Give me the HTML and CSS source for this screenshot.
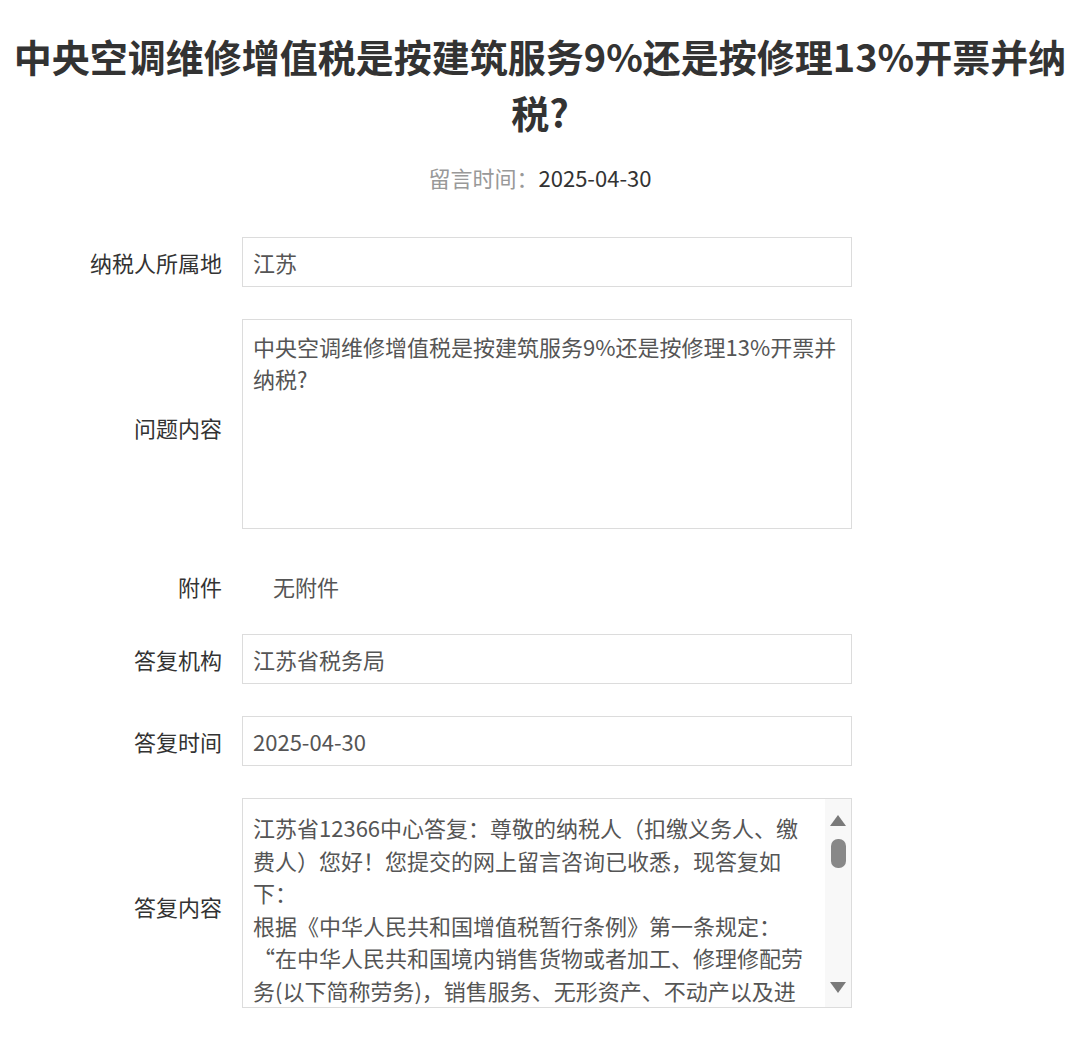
FILE: index.html
```html
<!DOCTYPE html>
<html lang="zh-CN">
<head>
<meta charset="utf-8">
<title>留言详情</title>
<link rel="stylesheet" href="styles.css">
</head>
<body>
<div class="page">
  <h1 class="title">中央空调维修增值税是按建筑服务9%还是按修理13%开票并纳税?</h1>
  <div class="meta"><span class="meta-label">留言时间：</span><span class="meta-value">2025-04-30</span></div>

  <div class="form">
    <div class="row">
      <div class="label">纳税人所属地</div>
      <div class="field input">江苏</div>
    </div>
    <div class="row">
      <div class="label label-tall">问题内容</div>
      <div class="field textarea">中央空调维修增值税是按建筑服务9%还是按修理13%开票并纳税?</div>
    </div>
    <div class="row row-attach">
      <div class="label">附件</div>
      <div class="attach">无附件</div>
    </div>
    <div class="row">
      <div class="label">答复机构</div>
      <div class="field input">江苏省税务局</div>
    </div>
    <div class="row">
      <div class="label">答复时间</div>
      <div class="field input">2025-04-30</div>
    </div>
    <div class="row">
      <div class="label label-tall">答复内容</div>
      <div class="field answer">
        <div class="answer-text">
          <span class="line">江苏省12366中心答复：尊敬的纳税人（扣缴义务人、缴</span>
          <span class="line">费人）您好！您提交的网上留言咨询已收悉，现答复如</span>
          <span class="line">下：</span>
          <span class="line">根据《中华人民共和国增值税暂行条例》第一条规定：</span>
          <span class="line">“在中华人民共和国境内销售货物或者加工、修理修配劳</span>
          <span class="line">务(以下简称劳务)，销售服务、无形资产、不动产以及进</span>
        </div>
        <div class="scrollbar">
          <span class="arrow-up"></span>
          <span class="thumb"></span>
          <span class="spacer"></span>
          <span class="arrow-down"></span>
        </div>
      </div>
    </div>
  </div>
</div>
</body>
</html>
```

FILE: styles.css
```css
* { box-sizing: border-box; }
html, body { margin: 0; padding: 0; background: #fff; }
body {
  font-family: "Noto Sans CJK SC", "Noto Sans", sans-serif;
  color: #333;
}
.page { width: 1080px; }
.title {
  margin: 28px 0 0;
  padding: 0 8px;
  font-size: 38px;
  line-height: 56px;
  font-weight: 700;
  text-align: center;
  color: #333;
}
.meta {
  margin-top: 22px;
  height: 30px;
  line-height: 30px;
  font-size: 22px;
  text-align: center;
}
.meta-label { color: #999; }
.meta-value { color: #333; }

.form { margin-top: 45px; }
.row {
  display: grid;
  grid-template-columns: 222px 610px;
  column-gap: 20px;
  align-items: center;
  margin-bottom: 32px;
}
.label {
  text-align: right;
  font-size: 22px;
  color: #333;
  white-space: nowrap;
}
.label-tall { padding-top: 6px; }
.field {
  border: 1px solid #dcdcdc;
  background: #fff;
  color: #555;
  font-size: 22px;
}
.input {
  height: 50px;
  line-height: 48px;
  padding: 0 10px;
}
.textarea {
  height: 210px;
  padding: 10px 10px;
  line-height: 32px;
}
.row-attach { height: 50px; margin-bottom: 23px; }
.attach {
  padding-left: 31px;
  font-size: 22px;
  color: #555;
}
.answer {
  height: 210px;
  display: flex;
  overflow: hidden;
}
.answer-text {
  flex: 1;
  padding: 12px 0 0 10px;
  line-height: 32.6px;
  overflow: hidden;
}
.line { display: block; white-space: nowrap; }
.scrollbar {
  width: 26px;
  background: #f8f8f8;
  display: flex;
  flex-direction: column;
  align-items: center;
  padding: 16px 0 14px;
}
.arrow-up {
  width: 0; height: 0;
  border-left: 8px solid transparent;
  border-right: 8px solid transparent;
  border-bottom: 11px solid #7a7a7a;
}
.thumb {
  margin-top: 13px;
  width: 15px;
  height: 29px;
  border-radius: 7px;
  background: #888;
}
.spacer { flex: 1; }
.arrow-down {
  width: 0; height: 0;
  border-left: 8px solid transparent;
  border-right: 8px solid transparent;
  border-top: 11px solid #7a7a7a;
}
```
